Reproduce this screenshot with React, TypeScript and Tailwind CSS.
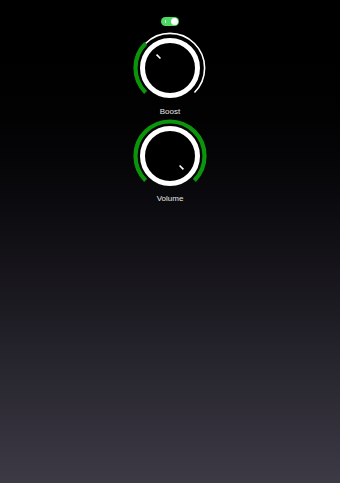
import React from 'react';

const SIZE = 76;
const C = SIZE / 2;

function polar(r: number, deg: number) {
  const a = (deg * Math.PI) / 180;
  return { x: C + r * Math.sin(a), y: C - r * Math.cos(a) };
}

function arc(r: number, from: number, to: number) {
  const s = polar(r, from);
  const e = polar(r, to);
  const large = to - from > 180 ? 1 : 0;
  return `M ${s.x} ${s.y} A ${r} ${r} 0 ${large} 1 ${e.x} ${e.y}`;
}

function Knob({ value }: { value: number }) {
  const start = -135;
  const end = 135;
  const angle = start + (end - start) * value;
  const p1 = polar(13.5, angle);
  const p2 = polar(19, angle);

  return (
    <svg width={SIZE} height={SIZE} viewBox={`0 0 ${SIZE} ${SIZE}`}>
      {value < 1 && (
        <path d={arc(34.6, angle, end)} fill="none" stroke="#ffffff" strokeWidth={1.6} />
      )}
      {value > 0 && (
        <path d={arc(34.5, start, angle)} fill="none" stroke="#0a950a" strokeWidth={4.2} />
      )}
      <circle cx={C} cy={C} r={27.5} fill="#000" stroke="#ffffff" strokeWidth={5} />
      <line x1={p1.x} y1={p1.y} x2={p2.x} y2={p2.y} stroke="#ffffff" strokeWidth={1.6} />
    </svg>
  );
}

function Toggle({ on }: { on: boolean }) {
  return (
    <div
      className={`relative w-[18px] h-[9px] rounded-full ${on ? 'bg-[#4cd964]' : 'bg-[#3a3a3c]'}`}
    >
      <span className="absolute left-[4px] top-[3px] w-px h-[3px] bg-white/80" />
      <span className="absolute right-[1px] top-[1px] w-[7px] h-[7px] rounded-full bg-white" />
    </div>
  );
}

export default function App() {
  return (
    <div className="w-[340px] h-[483px] bg-gradient-to-b from-[#000000] to-[#3d3a46] flex flex-col items-center pt-[17px] font-['Liberation_Sans',Arial,sans-serif]">
      <Toggle on />
      <div className="mt-[4px]">
        <Knob value={1 / 3} />
      </div>
      <p className="mt-px text-[8px] leading-[10px] text-[#e6e6e6]">Boost</p>
      <div className="mt-px">
        <Knob value={1} />
      </div>
      <p className="text-[8px] leading-[10px] text-[#e6e6e6]">Volume</p>
    </div>
  );
}
